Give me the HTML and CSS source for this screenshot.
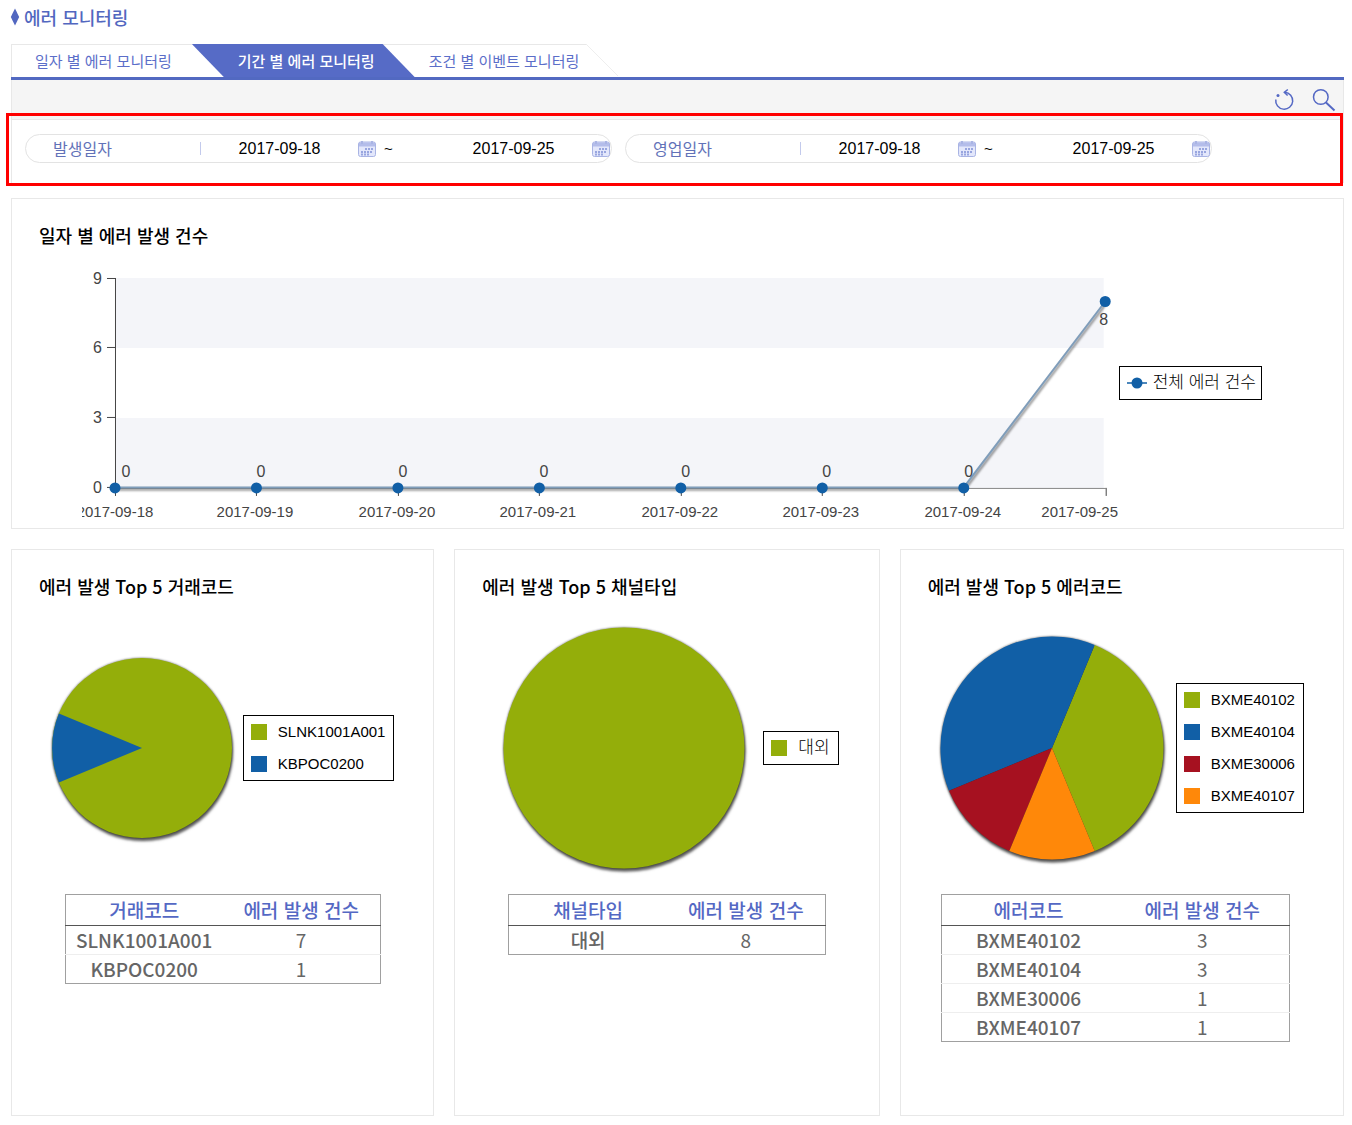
FILE: index.html
```html
<!DOCTYPE html>
<html lang="ko">
	<head>
		<meta charset="UTF-8">
		<title>에러 모니터링</title>
		<link rel="stylesheet" href="styles.css">
	</head>
	<body>
		<!-- 공통 아이콘 -->
		<svg class="defs" width="0" height="0">
			<symbol id="calendar" viewBox="0 0 18 17">
				<rect x="0.5" y="2" width="17" height="14.5" rx="2" fill="#e3e7fb" stroke="#a9b4e4"/>
				<path d="M1 2.5h16v4H1z" fill="#b4bdea"/>
				<path d="M4 1v3M14 1v3" stroke="#a9b4e4" stroke-width="2"/>
				<path d="M7 9h9M3 12h12M3 14.5h9" stroke="#98a5df" stroke-width="2" stroke-dasharray="2 1"/>
			</symbol>
		</svg>
		<div class="container">
			<h1 class="title">
				<svg width="10" height="18" viewBox="0 0 10 18"><path d="M5 0.500L9.200 9 5 17.500 0.800 9z" fill="#5267c0"/></svg>
				에러 모니터링
			</h1>
			<ul class="tabs">
				<li><a href="#">일자 별 에러 모니터링</a></li>
				<li class="active"><a href="#">기간 별 에러 모니터링</a></li>
				<li class="last"><a href="#">조건 별 이벤트 모니터링</a></li>
			</ul>
			<div class="toolbar">
				<button type="button" aria-label="초기화">
					<svg width="24" height="24" viewBox="0 0 24 24" fill="none" stroke="#5468c4" stroke-width="1.500">
						<path d="M3.800 11.500a8.500 8.500 0 1 0 9-7.300"/>
						<path d="M15.800 1.500L12.300 4.300l3.300 3.200"/>
						<circle cx="6" cy="7.500" r="1.500" fill="#5468c4" stroke="none"/>
					</svg>
				</button>
				<button type="button" aria-label="조회">
					<svg width="24" height="24" viewBox="0 0 24 24" fill="none" stroke="#5468c4">
						<circle cx="8.800" cy="9" r="7.300" stroke-width="1.500"/>
						<path d="M14 14.500l8.500 8" stroke-width="2"/>
					</svg>
				</button>
			</div>
			<form class="search">
				<div class="field">
					<label for="occurFrom">발생일자</label>
					<i class="bar"></i>
					<input id="occurFrom" type="text" value="2017-09-18">
					<button type="button" aria-label="달력"><svg width="18" height="17"><use href="#calendar"/></svg></button>
					<span class="wave">~</span>
					<input id="occurTo" type="text" value="2017-09-25" aria-label="발생일자 종료">
					<button type="button" aria-label="달력"><svg width="18" height="17"><use href="#calendar"/></svg></button>
				</div>
				<div class="field">
					<label for="workFrom">영업일자</label>
					<i class="bar"></i>
					<input id="workFrom" type="text" value="2017-09-18">
					<button type="button" aria-label="달력"><svg width="18" height="17"><use href="#calendar"/></svg></button>
					<span class="wave">~</span>
					<input id="workTo" type="text" value="2017-09-25" aria-label="영업일자 종료">
					<button type="button" aria-label="달력"><svg width="18" height="17"><use href="#calendar"/></svg></button>
				</div>
			</form>

			<!-- 일자 별 라인 차트 -->
			<section class="card daily">
				<h2>일자 별 에러 발생 건수</h2>
				<div class="lineBox">
					<svg class="line" viewBox="0 0 1037 262">
						<path class="band" d="M34 13h988v70H34zM34 153h988v70H34z"/>
						<path class="axis" d="M33.500 13v218M25 13.500h9M25 82.500h9M25 152.500h9M25 222.500h9M174.500 223v8M316.500 223v8M457.500 223v8M599.500 223v8M740.500 223v8M882.500 223v8M1024.500 223v8"/>
						<path class="base" d="M34 223.500h991"/>
						<path class="series" d="M33 222.500H882L1023.500 36.500"/>
						<g class="dots">
							<circle cx="33" cy="223" r="5.500"/>
							<circle cx="174.500" cy="223" r="5.500"/>
							<circle cx="316" cy="223" r="5.500"/>
							<circle cx="457.500" cy="223" r="5.500"/>
							<circle cx="599" cy="223" r="5.500"/>
							<circle cx="740.500" cy="223" r="5.500"/>
							<circle cx="882" cy="223" r="5.500"/>
							<circle cx="1023.500" cy="36.500" r="5.500"/>
						</g>
						<g class="yText">
							<text x="20" y="19">9</text>
							<text x="20" y="88">6</text>
							<text x="20" y="158">3</text>
							<text x="20" y="228">0</text>
						</g>
						<g class="xText">
							<text x="33" y="252">2017-09-18</text>
							<text x="173" y="252">2017-09-19</text>
							<text x="315" y="252">2017-09-20</text>
							<text x="456" y="252">2017-09-21</text>
							<text x="598" y="252">2017-09-22</text>
							<text x="739" y="252">2017-09-23</text>
							<text x="881" y="252">2017-09-24</text>
							<text x="998" y="252">2017-09-25</text>
						</g>
						<g class="valText">
							<text x="44" y="212">0</text>
							<text x="179" y="212">0</text>
							<text x="321" y="212">0</text>
							<text x="462" y="212">0</text>
							<text x="604" y="212">0</text>
							<text x="745" y="212">0</text>
							<text x="887" y="212">0</text>
							<text x="1022" y="60">8</text>
						</g>
					</svg>
					<ul class="legend single">
						<li>
							<svg width="20" height="12" viewBox="0 0 20 12"><path d="M0 6h20" stroke="#115fa6" stroke-width="1.500"/><circle cx="10" cy="6" r="5.500" fill="#115fa6"/></svg>
							전체 에러 건수
						</li>
					</ul>
				</div>
			</section>

			<!-- Top 5 파이 차트 -->
			<div class="topBox">
				<section class="card">
					<h2>에러 발생 Top 5 거래코드</h2>
					<div class="pieBox">
						<svg class="pie" width="184" height="184" viewBox="0 0 184 184">
							<circle cx="91" cy="92" r="90" fill="#94ae0a"/>
							<path d="M91 92L7.900 57.600A90 90 0 0 0 7.900 126.400z" fill="#115fa6"/>
						</svg>
						<ul class="legend">
							<li><i class="green"></i>SLNK1001A001</li>
							<li><i class="blue"></i>KBPOC0200</li>
						</ul>
					</div>
					<table>
						<thead>
							<tr><th>거래코드</th><th>에러 발생 건수</th></tr>
						</thead>
						<tbody>
							<tr><td>SLNK1001A001</td><td>7</td></tr>
							<tr><td>KBPOC0200</td><td>1</td></tr>
						</tbody>
					</table>
				</section>
				<section class="card">
					<h2>에러 발생 Top 5 채널타입</h2>
					<div class="pieBox">
						<svg class="pie" width="260" height="260" viewBox="0 0 260 260">
							<circle cx="129" cy="130" r="120.500" fill="#94ae0a"/>
						</svg>
						<ul class="legend single">
							<li><i class="green"></i>대외</li>
						</ul>
					</div>
					<table>
						<thead>
							<tr><th>채널타입</th><th>에러 발생 건수</th></tr>
						</thead>
						<tbody>
							<tr><td>대외</td><td>8</td></tr>
						</tbody>
					</table>
				</section>
				<section class="card code">
					<h2>에러 발생 Top 5 에러코드</h2>
					<div class="pieBox">
						<svg class="pie" width="228" height="228" viewBox="0 0 228 228">
							<path d="M112 114L154.700 11A111.500 111.500 0 0 1 154.700 217z" fill="#94ae0a"/>
							<path d="M112 114L9 156.700A111.500 111.500 0 0 1 154.700 11z" fill="#115fa6"/>
							<path d="M112 114L69.300 217A111.500 111.500 0 0 1 9 156.700z" fill="#a61120"/>
							<path d="M112 114L154.700 217A111.500 111.500 0 0 1 69.300 217z" fill="#ff8809"/>
						</svg>
						<ul class="legend">
							<li><i class="green"></i>BXME40102</li>
							<li><i class="blue"></i>BXME40104</li>
							<li><i class="red"></i>BXME30006</li>
							<li><i class="orange"></i>BXME40107</li>
						</ul>
					</div>
					<table>
						<thead>
							<tr><th>에러코드</th><th>에러 발생 건수</th></tr>
						</thead>
						<tbody>
							<tr><td>BXME40102</td><td>3</td></tr>
							<tr><td>BXME40104</td><td>3</td></tr>
							<tr><td>BXME30006</td><td>1</td></tr>
							<tr><td>BXME40107</td><td>1</td></tr>
						</tbody>
					</table>
				</section>
			</div>
		</div>
	</body>
</html>
```
FILE: styles.css
```css
*{
	box-sizing: border-box;
}
body, h1, h2, ul, form{
	margin: 0;
	padding: 0;
}
body{
	background: #FFF;
	color: #000;
	font-family: "Noto Sans CJK KR", sans-serif;
	font-size: 15px;
}
li{
	list-style: none;
}
a{
	text-decoration: none;
}
button{
	display: block;
	border: none;
	padding: 0;
	background: none;
	cursor: pointer;
}
svg{
	display: block;
}
.defs{
	position: absolute;
}
.container{
	padding: 0 8px 7px 11px;
}
.title{
	display: flex;
	align-items: center;
	gap: 4px;
	height: 34px;
	margin-bottom: 10px;
	margin-left: -1px;
	font-size: 18px;
	font-weight: 500;
	color: #5267c0;
}

/* 탭 */
.tabs{
	display: flex;
	height: 36px;
	border-bottom: solid 3px #5269c1;
}
.tabs li{
	border-top: solid 1px #E8E8E8;
}
.tabs li:first-child{
	border-left: solid 1px #E8E8E8;
}
.tabs a{
	display: block;
	line-height: 32px;
	padding: 0 20px 0 23px;
	color: #5b6ec9;
}
.tabs .active{
	position: relative;
	z-index: 1;
	border-top: none;
	padding-top: 1px;
	background: #566bc6;
	clip-path: polygon(0 0, calc(100% - 32px) 0, 100% 100%, 32px 100%);
}
.tabs .active a{
	padding: 0 40px 0 46px;
	font-weight: 500;
	color: #FFF;
}
.tabs .last{
	position: relative;
	margin-left: -32px;
}
.tabs .last a{
	padding: 0 7px 0 46px;
}
.tabs .last::after{
	content: "";
	position: absolute;
	top: -1px;
	left: 100%;
	width: 32px;
	height: 32px;
	background: linear-gradient(45deg, transparent 49%, #EEE 49%, #EEE 51%, transparent 51%);
}

/* 조회 조건 */
.toolbar{
	display: flex;
	justify-content: flex-end;
	align-items: center;
	gap: 16px;
	height: 40px;
	padding-right: 7px;
	background: #F5F5F5;
	border: solid 1px #E8E8E8;
	border-top: none;
}
.search{
	display: flex;
	flex-wrap: wrap;
	gap: 13px;
	padding: 14px 13px 20px;
	margin-bottom: 15px;
	border: solid #E8E8E8;
	border-width: 0 1px;
	position: relative;
}
.search::after{
	content: "";
	position: absolute;
	top: -7px;
	right: 0;
	bottom: -3px;
	left: -6px;
	border: solid 3px #FF0000;
	pointer-events: none;
}
.field{
	display: flex;
	align-items: center;
	flex: 0 1 587px;
	height: 29px;
	border: solid 1px #E3E3E3;
	border-radius: 15px;
	padding-left: 27px;
}
.field label{
	flex: 0 1 147px;
	font-size: 16px;
	line-height: 27px;
	color: #6272b8;
}
.bar{
	width: 1px;
	height: 13px;
	background: #C3CAEC;
}
.field input{
	flex: 0 1 157px;
	min-width: 0;
	height: 27px;
	padding: 0;
	border: none;
	outline: none;
	background: none;
	font: 16px "Liberation Sans", sans-serif;
	text-align: center;
}
.wave{
	flex: 0 0 59px;
	padding-left: 8px;
	font: 15px "Liberation Sans", sans-serif;
}

/* 차트 */
.card{
	border: solid 1px #E8E8E8;
	padding-top: 24px;
}
.card h2{
	padding-left: 27px;
	font-size: 18px;
	font-weight: 500;
	line-height: 24px;
}
.daily{
	margin-bottom: 20px;
	padding-bottom: 1px;
}
.lineBox{
	display: flex;
	align-items: center;
	padding: 18px 81px 0 70px;
}
.line{
	flex: 1;
	min-width: 0;
	overflow: hidden;
}
.band{
	fill: #F4F5F9;
}
.axis{
	fill: none;
	stroke: #444;
}
.base{
	stroke: #888;
}
.series{
	fill: none;
	stroke: #7f9dba;
	stroke-width: 2;
	filter: drop-shadow(1px 2px 1px rgba(0, 0, 0, .5));
}
.dots{
	fill: #115fa6;
}
.yText, .xText, .valText{
	font-family: "Liberation Sans", sans-serif;
	font-size: 16px;
	fill: #444;
	text-anchor: middle;
}
.yText{
	text-anchor: end;
}
.xText{
	font-size: 15px;
}
.legend{
	flex: none;
	padding: 0 8px 0 7px;
	border: solid 1px #000;
	background: #FFF;
	font-family: "Liberation Sans", "Noto Sans CJK KR", sans-serif;
}
.legend li{
	display: flex;
	align-items: center;
	gap: 11px;
	line-height: 32px;
}
.legend i{
	width: 16px;
	height: 16px;
}
.single{
	font-size: 17px;
	font-weight: 300;
}
.lineBox .legend{
	margin-bottom: 26px;
	padding-right: 5px;
}
.lineBox li{
	gap: 6px;
}
.green{
	background: #94ae0a;
}
.blue{
	background: #115fa6;
}
.red{
	background: #a61120;
}
.orange{
	background: #ff8809;
}
.topBox{
	display: grid;
	grid-template-columns: 423fr 425fr 444fr;
	gap: 20px;
}
.topBox .card{
	padding-bottom: 73px;
}
.pieBox{
	display: flex;
	justify-content: center;
	align-items: center;
	gap: 8px;
	height: 296px;
	padding-top: 4px;
}
.pie{
	overflow: visible;
	filter: drop-shadow(0 0 1px rgba(0, 0, 0, .6)) drop-shadow(1px 3px 1px rgba(0, 0, 0, .6));
}

/* 건수 테이블 */
table{
	width: 75%;
	margin: 0 auto;
	table-layout: fixed;
	border-collapse: collapse;
	border: solid 1px #A0A0A0;
	font-size: 19px;
	color: #666;
}
.code table{
	width: 79%;
	margin-left: 40px;
}
th, td{
	height: 29px;
	padding: 0;
	line-height: 28px;
	text-align: center;
}
th{
	height: 31px;
	font-weight: 500;
	color: #5468c4;
	border-bottom: solid 1px #555;
}
td{
	border-top: solid 1px #EEE;
}
tbody tr:first-child td{
	border-top: none;
}
td:first-child{
	font-weight: 500;
}
```
